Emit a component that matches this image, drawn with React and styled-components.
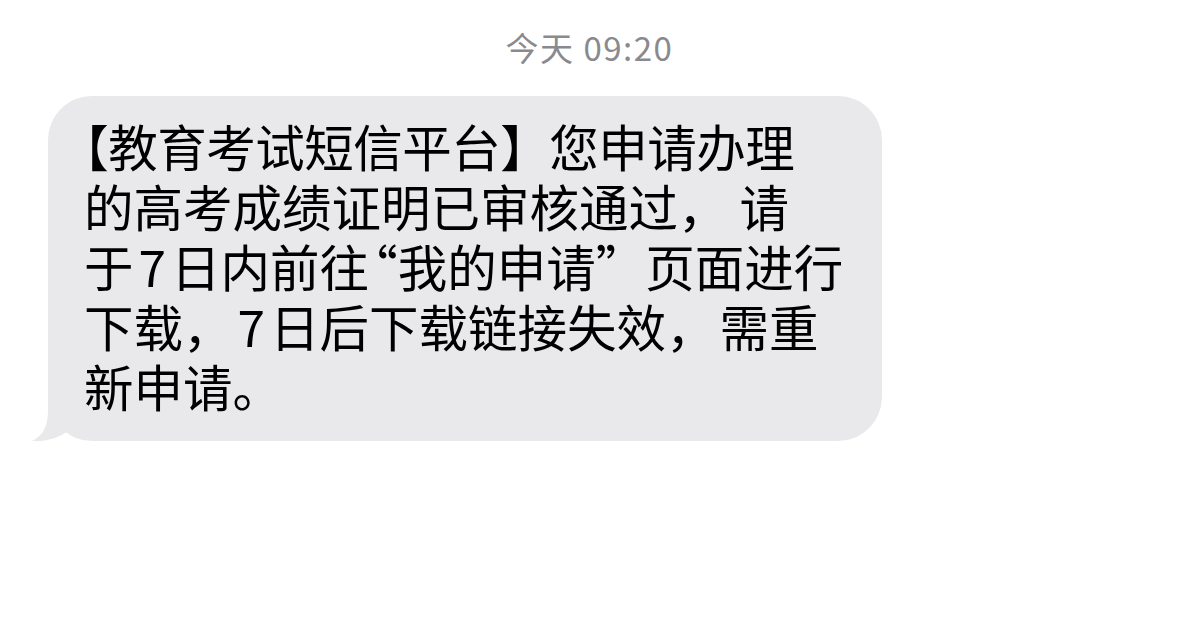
import React from 'react';
import styled, { createGlobalStyle } from 'styled-components';

const GlobalStyle = createGlobalStyle`
  html, body {
    margin: 0;
    padding: 0;
    background: #ffffff;
  }
  body {
    font-family: "Noto Sans CJK SC", "Noto Sans", sans-serif;
  }
`;

const Screen = styled.main`
  display: flex;
  flex-direction: column;
  width: 1179px;
  height: 621px;
  padding-top: 27px;
  box-sizing: border-box;
  overflow: hidden;
`;

const Stamp = styled.div`
  align-self: center;
  height: 40px;
  line-height: 40px;
  font-size: 33px;
  color: #8a8a8e;
  letter-spacing: 1.5px;
`;

const Thread = styled.div`
  display: flex;
  flex-direction: column;
  align-items: flex-start;
  padding: 29px 0 0 48px;
`;

const Bubble = styled.div`
  position: relative;
  width: 834px;
  box-sizing: border-box;
  padding: 20px 30px 25px 36px;
  background: #e9e9eb;
  border-radius: 44px;
  color: #000000;
  font-size: 49.5px;
  line-height: 60px;
`;

const Line = styled.div`
  white-space: nowrap;
  letter-spacing: ${({ $tight }) => ($tight ? '-0.5px' : '0')};
`;

/* punctuation: $trim = half-width (halt), $before / $after = extra room */
const Mark = styled.span`
  font-feature-settings: ${({ $trim }) => ($trim ? '"halt" 1' : 'normal')};
  margin-left: ${({ $before }) => $before || 0};
  margin-right: ${({ $after }) => $after || 0};
`;

const Num = styled.span`
  padding: 0 5px;
`;

const Tail = styled.svg`
  position: absolute;
  left: -20px;
  bottom: -1px;
  width: 60px;
  height: 62px;
`;

const App = () => (
  <>
    <GlobalStyle />
    <Screen>
      <Stamp>今天 09:20</Stamp>
      <Thread>
        <Bubble>
          <Tail viewBox="0 0 60 62">
            <path
              d="M20 10 L20 30 C20 48 14 56 4 61 C18 62 30 58 40 51 L42 10 Z"
              fill="#e9e9eb"
            />
          </Tail>
          <Line $tight>
            <Mark $trim>【</Mark>教育考试短信平台】您申请办理
          </Line>
          <Line>
            的高考成绩证明已审核通过<Mark $after="12px">，</Mark>请
          </Line>
          <Line>
            于<Num>7</Num>日内前往<Mark $trim $before="4px">“</Mark>我的申请”页面进行
          </Line>
          <Line>
            下载，<Num>7</Num>日后下载链接失效<Mark $after="4px">，</Mark>需重
          </Line>
          <Line>新申请。</Line>
        </Bubble>
      </Thread>
    </Screen>
  </>
);

export default App;
